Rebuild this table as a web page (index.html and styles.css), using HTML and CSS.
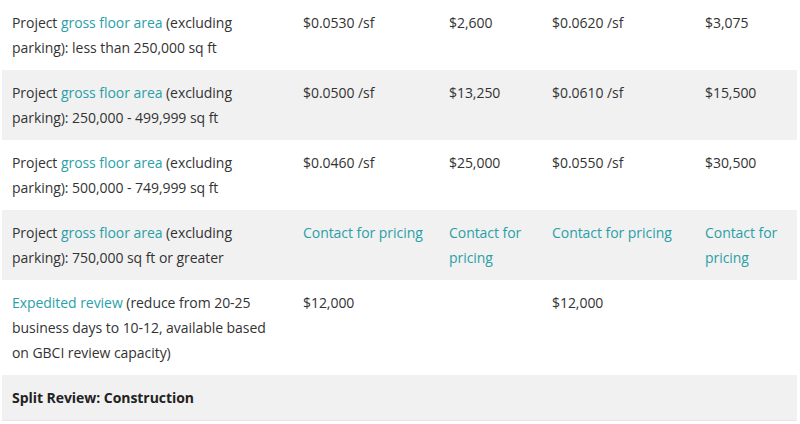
FILE: index.html
```html
<!DOCTYPE html>
<html lang="en">
<head>
<meta charset="utf-8">
<title>Pricing</title>
<link rel="stylesheet" href="styles.css">
</head>
<body>
<table class="fees">
  <colgroup>
    <col class="c1"><col class="c2"><col class="c3"><col class="c4"><col class="c5">
  </colgroup>
  <tbody>
    <tr class="first">
      <td>Project <a href="#">gross floor area</a> (excluding parking): less than 250,000 sq ft</td>
      <td>$0.0530 /sf</td>
      <td>$2,600</td>
      <td>$0.0620 /sf</td>
      <td>$3,075</td>
    </tr>
    <tr class="alt">
      <td>Project <a href="#">gross floor area</a> (excluding parking): 250,000 - 499,999 sq ft</td>
      <td>$0.0500 /sf</td>
      <td>$13,250</td>
      <td>$0.0610 /sf</td>
      <td>$15,500</td>
    </tr>
    <tr>
      <td>Project <a href="#">gross floor area</a> (excluding parking): 500,000 - 749,999 sq ft</td>
      <td>$0.0460 /sf</td>
      <td>$25,000</td>
      <td>$0.0550 /sf</td>
      <td>$30,500</td>
    </tr>
    <tr class="alt">
      <td>Project <a href="#">gross floor area</a> (excluding parking): 750,000 sq ft or greater</td>
      <td><a href="#">Contact for pricing</a></td>
      <td><a href="#">Contact for pricing</a></td>
      <td><a href="#">Contact for pricing</a></td>
      <td><a href="#">Contact for pricing</a></td>
    </tr>
    <tr>
      <td><a href="#">Expedited review</a> (reduce from 20-25 business days to 10-12, available based on GBCI review capacity)</td>
      <td>$12,000</td>
      <td></td>
      <td>$12,000</td>
      <td></td>
    </tr>
    <tr class="alt last">
      <td colspan="5"><strong>Split Review: Construction</strong></td>
    </tr>
  </tbody>
</table>
</body>
</html>
```
FILE: styles.css
```css
html, body {
  margin: 0;
  padding: 0;
  background: #ffffff;
}
body {
  padding: 0 3px 0 2px;
  font-family: "Open Sans", "Noto Sans", sans-serif;
  font-size: 14px;
  letter-spacing: -0.05px;
  color: #333333;
}
.fees {
  width: 795px;
  border-collapse: collapse;
  table-layout: fixed;
}
.c1 { width: 291px; }
.c2 { width: 146px; }
.c3 { width: 103px; }
.c4 { width: 153px; }
.c5 { width: 102px; }
.fees td {
  vertical-align: top;
  padding: 10px;
  line-height: 25px;
}
.fees tr.first td {
  padding-top: 10px;
}
.fees tr.alt td {
  background: #f1f1f1;
}
.fees tr.last td {
  border-bottom: 1px solid #e6e6e6;
}
.fees a {
  color: #2a9fa8;
  text-decoration: none;
}
.fees strong {
  font-weight: 700;
  color: #222222;
}
```
